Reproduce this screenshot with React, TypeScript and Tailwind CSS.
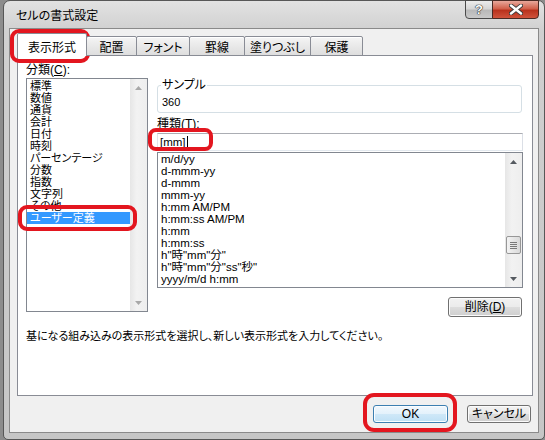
import React from "react";

const CATEGORIES = [
  "標準",
  "数値",
  "通貨",
  "会計",
  "日付",
  "時刻",
  "パーセンテージ",
  "分数",
  "指数",
  "文字列",
  "その他",
  "ユーザー定義",
];

const FORMATS = [
  "m/d/yy",
  "d-mmm-yy",
  "d-mmm",
  "mmm-yy",
  "h:mm AM/PM",
  "h:mm:ss AM/PM",
  "h:mm",
  "h:mm:ss",
  'h"時"mm"分"',
  'h"時"mm"分"ss"秒"',
  "yyyy/m/d h:mm",
];

const TABS = [
  { label: "配置", w: "w-[51px]" },
  { label: "フォント", w: "w-[54px]" },
  { label: "罫線", w: "w-[56px]" },
  { label: "塗りつぶし", w: "w-[67px]" },
  { label: "保護", w: "w-[53px]" },
];

const btnFace =
  "bg-[linear-gradient(to_bottom,#f2f2f2_0%,#ebebeb_50%,#dddddd_51%,#cfcfcf_100%)] border border-[#707070] rounded-[3px] shadow-[inset_0_0_0_1px_#fbfbfb]";

function Arrow({ up, disabled }: { up?: boolean; disabled?: boolean }) {
  return (
    <svg width="7" height="4" viewBox="0 0 7 4">
      <path
        d={up ? "M0 4 L3.5 0 L7 4 Z" : "M0 0 L3.5 4 L7 0 Z"}
        fill={disabled ? "#a8a8a8" : "#555a60"}
      />
    </svg>
  );
}

function ScrollBar({ thumbTop, disabled }: { thumbTop?: number; disabled?: boolean }) {
  return (
    <div className="w-[17px] shrink-0 h-full flex flex-col bg-[linear-gradient(to_right,#e6e6e6,#f2f2f2_40%,#eeeeee)]">
      <div className="h-[17px] flex items-center justify-center">
        <Arrow up disabled={disabled} />
      </div>
      <div className="flex-1 flex flex-col">
        {thumbTop !== undefined && (
          <>
            <div style={{ height: thumbTop }} />
            <div className="mx-[1px] h-[18px] rounded-[2px] border border-[#979797] bg-[linear-gradient(to_right,#f3f3f3,#e6e6e6_50%,#dadada)] flex flex-col items-center justify-center gap-[1px]">
              <div className="w-[7px] h-px bg-[#7a7a7a]" />
              <div className="w-[7px] h-px bg-[#7a7a7a]" />
              <div className="w-[7px] h-px bg-[#7a7a7a]" />
              <div className="w-[7px] h-px bg-[#7a7a7a]" />
            </div>
          </>
        )}
      </div>
      <div className="h-[17px] flex items-center justify-center">
        <Arrow disabled={disabled} />
      </div>
    </div>
  );
}

export default function App() {
  return (
    <div
      className="relative w-[545px] h-[440px] overflow-hidden bg-[#8c8c8c] pl-[3px] text-black [font-feature-settings:'palt']"
      style={{ fontFamily: '"Liberation Sans", "Noto Sans CJK JP", sans-serif' }}
    >
      {/* window frame */}
      <div className="h-full flex flex-col rounded-t-[7px] rounded-b-[5px] border border-[#575757] px-[5px] pb-[6px] bg-[linear-gradient(to_bottom,#e2e2e2,#d0d0d0_30px,#c6c6c6)]">
        {/* title bar */}
        <div className="h-[27px] flex justify-between">
          <div className="pl-[7px] pt-[8px] text-[12px] leading-[14px]">セルの書式設定</div>
          <div className="flex -mt-px">
            <div className="w-[28px] h-[19px] border border-[#4a4a4a] rounded-bl-[4px] bg-[linear-gradient(to_bottom,#ececec,#d6d6d6_45%,#b9b9b9_55%,#c9c9c9)] flex items-center justify-center text-[13px] font-bold text-white [text-shadow:0_0_1px_#222,0_0_1px_#222,0_0_1px_#222]">
              ?
            </div>
            <div className="w-[47px] h-[19px] -ml-px border border-[#4a2a24] rounded-br-[4px] bg-[linear-gradient(to_bottom,#e8a89b,#d1604b_45%,#b9321d_55%,#d0533c)] flex items-center justify-center">
              <svg width="14" height="11" viewBox="0 0 14 11">
                <path d="M2 1.5 L12 9.5 M12 1.5 L2 9.5" stroke="#3a3a3a" strokeWidth="4.2" strokeLinecap="round" />
                <path d="M2 1.5 L12 9.5 M12 1.5 L2 9.5" stroke="#ffffff" strokeWidth="2.4" strokeLinecap="round" />
              </svg>
            </div>
          </div>
        </div>

        {/* client area */}
        <div className="flex-1 flex flex-col border border-[#8a8a8a] bg-[#f0f0f0] pl-[7px] pr-[5px] pt-[4px]">
          {/* tabs */}
          <div className="relative z-10 h-[23px] flex items-end text-[12px] leading-[12px]">
            <div className="w-[70px] h-[23px] border border-b-0 border-[#898c95] bg-white rounded-t-[2px] flex justify-center pt-[8px]">
              表示形式
            </div>
            {TABS.map((t) => (
              <div
                key={t.label}
                className={`${t.w} -ml-px h-[20px] border border-[#898c95] rounded-t-[2px] bg-[linear-gradient(to_bottom,#f5f5f5,#e9e9e9_50%,#dedede)] shadow-[inset_0_1px_0_#ffffff] flex justify-center pt-[5px]`}
              >
                {t.label}
              </div>
            ))}
          </div>

          {/* panel */}
          <div className="-mt-px h-[341px] border border-[#898c95] bg-white px-[8px] pt-[8px] text-[12px] leading-[12px]">
            <div className="flex">
              {/* left column */}
              <div className="w-[122px] flex flex-col">
                <div className="h-[12px]">
                  分類(<span className="underline">C</span>):
                </div>
                <div className="mt-[2px] h-[234px] border border-[#828790] flex">
                  <div className="flex-1 pt-[1px] text-[11px]">
                    {CATEGORIES.map((c, i) => (
                      <div
                        key={c}
                        className={`h-[12px] leading-[12px] pl-[3px] whitespace-nowrap ${
                          i === CATEGORIES.length - 1 ? "bg-[#3399ff] text-white" : ""
                        }`}
                      >
                        {c}
                      </div>
                    ))}
                  </div>
                  <ScrollBar disabled />
                </div>
              </div>

              {/* right column */}
              <div className="ml-[9px] w-[366px] flex flex-col">
                <div className="relative mt-[21px] w-[365px] h-[28px] border border-[#d5dfe5] rounded-[3px] pl-[4px] pt-[10px]">
                  <span className="absolute -top-[7px] left-[3px] bg-white px-[1px]">サンプル</span>
                  <span className="text-[11px]">360</span>
                </div>
                <div className="mt-[5px] h-[12px]">
                  種類(<span className="underline">T</span>):
                </div>
                <div className="mt-[3px] h-[18px] border border-[#abadb3] border-l-[#e2e3ea] border-r-[#dbdfe6] border-b-[#e3e9ef] flex items-center pl-[2px] text-[11.5px]">
                  [mm]
                  <span className="ml-px w-px h-[13px] bg-black" />
                </div>
                <div className="mt-[1px] h-[136px] border border-[#828790] flex text-[11.5px]">
                  <div className="flex-1 overflow-hidden">
                    {FORMATS.map((f) => (
                      <div key={f} className="h-[12px] leading-[12px] pl-[3px] whitespace-nowrap">
                        {f}
                      </div>
                    ))}
                  </div>
                  <ScrollBar thumbTop={66} />
                </div>
                <div className="mt-[9px] flex justify-end pr-[1px]">
                  <div className={`w-[74px] h-[20px] ${btnFace} flex items-center justify-center`}>
                    削除(<span className="underline">D</span>)
                  </div>
                </div>
              </div>
            </div>

            <div className="mt-[13px] h-[12px] text-[11px]">
              基になる組み込みの表示形式を選択し、新しい表示形式を入力してください。
            </div>
          </div>

          {/* buttons */}
          <div className="mt-[9px] flex justify-end pr-[2px] gap-[19px] text-[12px] leading-[12px]">
            <div className="w-[75px] h-[18px] border border-[#3c7fb1] rounded-[3px] bg-[linear-gradient(to_bottom,#f1f8fd_0%,#e3f1fb_50%,#cfe8f8_51%,#bfe0f5_100%)] shadow-[inset_0_0_0_1px_#fafdff] flex items-center justify-center">
              OK
            </div>
            <div className={`w-[64px] h-[18px] ${btnFace} flex items-center justify-center`}>
              キャンセル
            </div>
          </div>
        </div>
      </div>

      {/* red annotation marks */}
      <div className="absolute left-[10px] top-[29px] w-[80px] h-[34px] border-[4px] border-[#e3161f] rounded-[9px]" />
      <div className="absolute left-[18px] top-[205px] w-[119px] h-[26px] border-[4px] border-[#e3161f] rounded-[9px]" />
      <div className="absolute left-[148px] top-[128px] w-[65px] h-[23px] border-[4px] border-[#e3161f] rounded-[8px]" />
      <div className="absolute left-[363px] top-[393px] w-[94px] h-[39px] border-[4px] border-[#e3161f] rounded-[11px]" />
    </div>
  );
}
